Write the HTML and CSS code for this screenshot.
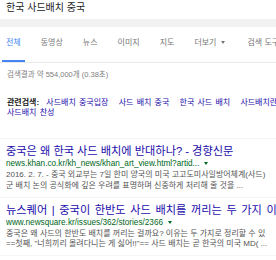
FILE: index.html
```html
<!DOCTYPE html>
<html lang="ko">
<head>
    <meta charset="UTF-8">
    <meta name="viewport" content="width=device-width, initial-scale=1.0">
    <title>한국 사드배치 중국 - Google 검색</title>
    <link rel="stylesheet" href="styles.css">
</head>
<body>
    <div class="header">
        <div class="query">한국 사드배치 중국</div>
    </div>

    <div class="tabs">
        <div class="tab active">전체</div>
        <div class="tab">동영상</div>
        <div class="tab">뉴스</div>
        <div class="tab">이미지</div>
        <div class="tab">지도</div>
        <div class="tab more">더보기<span class="caret"></span></div>
        <div class="tab">검색 도구</div>
    </div>

    <div class="stats">검색결과 약 554,000개 (0.38초)</div>

    <div class="related">
        <span class="label">관련검색:</span>
        <a href="#">사드배치 중국입장</a>
        <a href="#">사드 배치 중국</a>
        <a href="#">한국 사드 배치</a>
        <a href="#">사드배치란</a>
        <a href="#">사드배치 찬성</a>
    </div>

    <div class="result">
        <a class="title" href="#">중국은 왜 한국 사드 배치에 반대하나? - 경향신문</a>
        <div class="url">news.khan.co.kr/kh_news/khan_art_view.html?artid...<span class="caret green"></span></div>
        <div class="snippet">2016. 2. 7. - 중국 외교부는 7일 한미 양국의 미국 고고도미사일방어체계(사드)<br>군 배치 논의 공식화에 깊은 우려를 표명하며 신중하게 처리해 줄 것을 ...</div>
    </div>

    <div class="result">
        <a class="title wide" href="#">뉴스퀘어 | 중국이 한반도 사드 배치를 꺼리는 두 가지 이유</a>
        <div class="url">www.newsquare.kr/issues/362/stories/2366<span class="caret green"></span></div>
        <div class="snippet">중국은 왜 사드의 한반도 배치를 꺼리는 걸까요? 이유는 두 가지로 정리할 수 있<br>==첫째, "너희끼리 몰려다니는 게 싫어!!"== 사드 배치는 곧 한국의 미국 MD( ...</div>
    </div>
</body>
</html>
```

FILE: styles.css
```css
html {
    overflow: hidden;
}

body {
    margin: 0;
    padding: 0;
    width: 288px;
    background-color: #fff;
    font-family: "Liberation Sans", "Noto Sans CJK KR", sans-serif;
    color: #222;
}

a {
    text-decoration: none;
}

.header {
    height: 19px;
    border-bottom: 8px solid #f2f2f2;
}

.query {
    padding-left: 6px;
    font-size: 10px;
    line-height: 15px;
    color: #222;
}

.tabs {
    display: flex;
    gap: 11px;
    height: 35px;
    padding-left: 2px;
    border-bottom: 1px solid #ebebeb;
    white-space: nowrap;
}

.tab {
    flex-shrink: 0;
    box-sizing: border-box;
    height: 35px;
    padding: 9px 4px 0;
    font-size: 8px;
    line-height: 14px;
    color: #777;
    border-bottom: 2px solid transparent;
}

.tab:nth-child(n+2) {
    padding-left: 5px;
}

.tab.more {
    padding-right: 6px;
}

.tab.active {
    color: #4285f4;
    border-bottom-color: #4285f4;
}

.caret {
    display: inline-block;
    width: 0;
    height: 0;
    margin-left: 5px;
    vertical-align: middle;
    border-left: 2.5px solid transparent;
    border-right: 2.5px solid transparent;
    border-top: 3px solid #777;
}

.caret.green {
    border-top-color: #006621;
    margin-left: 5px;
}

.stats {
    margin-top: 6px;
    padding-left: 7px;
    font-size: 7.5px;
    line-height: 12px;
    color: #808080;
}

.related {
    margin-top: 17px;
    padding: 0 0 20px 7px;
    font-size: 8px;
    line-height: 10px;
    word-spacing: 1px;
    border-bottom: 1px solid #f4f4f4;
}

.related .label {
    font-weight: bold;
    color: #222;
    margin-right: 4px;
}

.related a {
    color: #1a0dab;
    margin-right: 7px;
    white-space: nowrap;
}

.result {
    padding: 6px 6px 5.5px;
    border-bottom: 1px solid #f4f4f4;
}

.result .title {
    display: block;
    font-size: 11.2px;
    line-height: 13px;
    color: #1a0dab;
    white-space: nowrap;
}

.result .title.wide {
    word-spacing: 1.5px;
}

.url {
    font-size: 8.2px;
    line-height: 12px;
    color: #006621;
    white-space: nowrap;
}

.snippet {
    font-size: 8px;
    line-height: 10.5px;
    color: #545454;
    white-space: nowrap;
}
```
